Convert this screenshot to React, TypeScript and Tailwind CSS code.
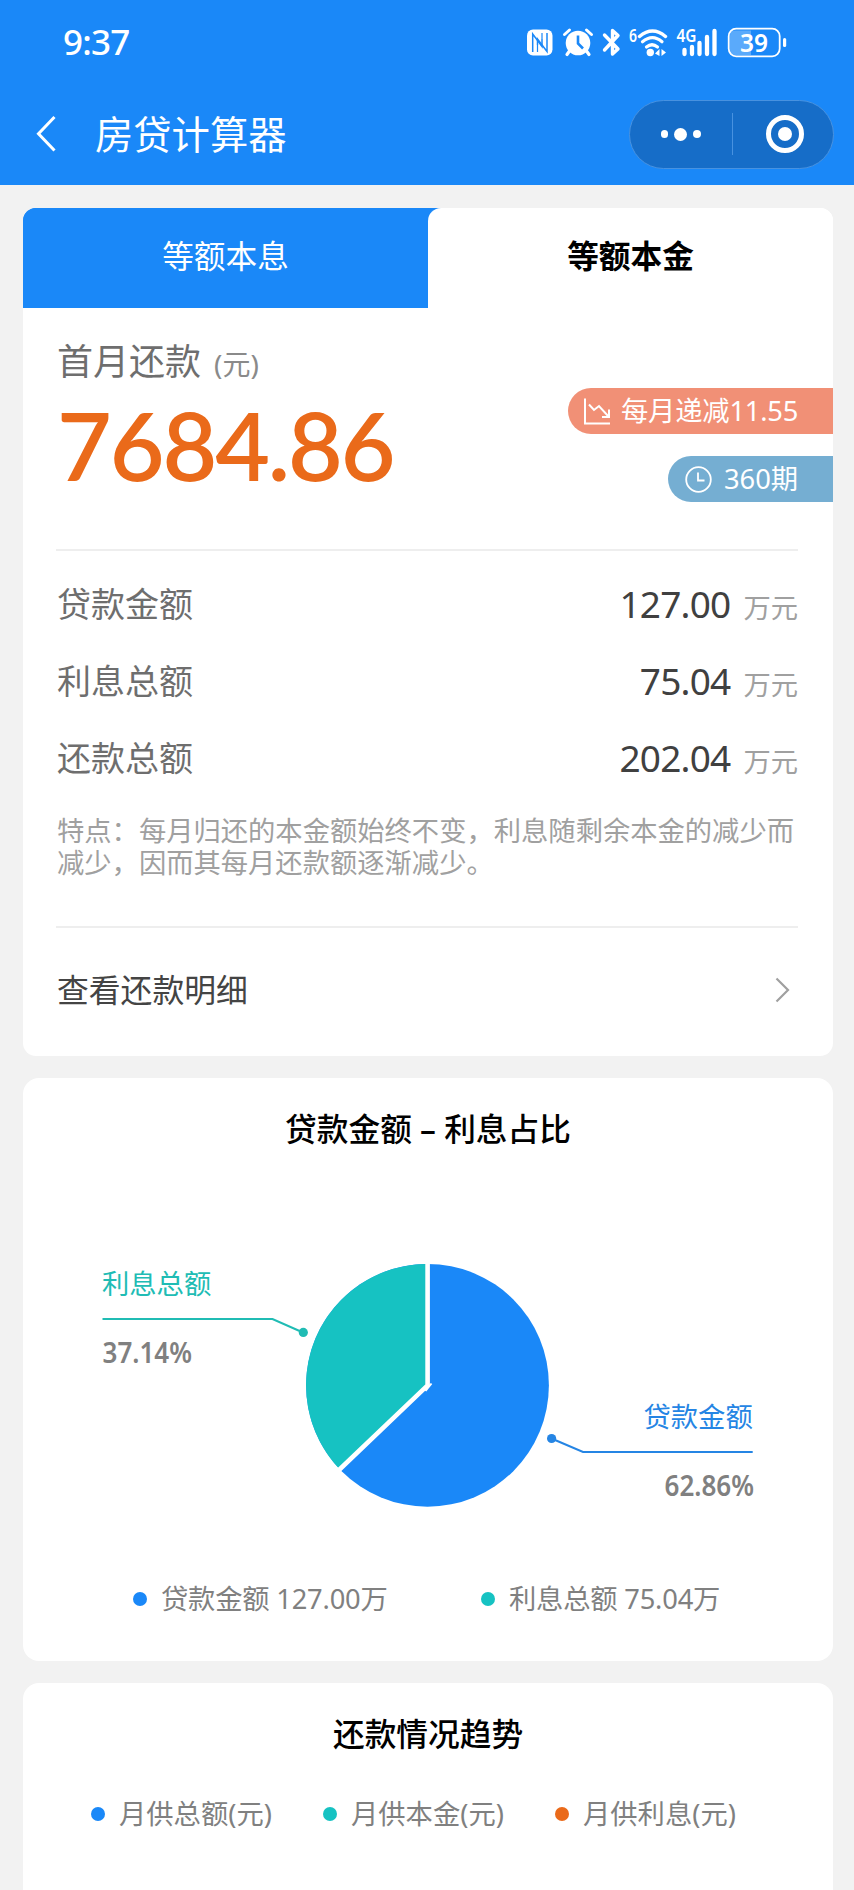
import React, { useState } from 'react';

type Dot = { color: string; label: string };

const TABS = ['等额本息', '等额本金'];

const ROWS = [
    { label: '贷款金额', value: '127.00' },
    { label: '利息总额', value: '75.04' },
    { label: '还款总额', value: '202.04' },
];

const TREND: Dot[] = [
    { color: 'bg-[#1a88f8]', label: '月供总额(元)' },
    { color: 'bg-[#16c2c2]', label: '月供本金(元)' },
    { color: 'bg-[#ea6a1a]', label: '月供利息(元)' },
];

const LegendItem: React.FC<Dot> = ({ color, label }) => (
    <div className="flex items-center gap-[14px]">
        <span className={`size-[14px] rounded-full ${color}`} />
        <span className="text-[27.3px] leading-[32px] whitespace-nowrap text-[#808080]">{label}</span>
    </div>
);

const StatusIcons = () => (
    <svg width="264" height="34" viewBox="525 24 264 34" fill="none" stroke="#fff">
        {/* NFC */}
        <rect x="527" y="28.5" width="25.5" height="26" rx="6" fill="#fff" stroke="none" />
        <path d="M532.7 51V33L542 45.5V38" stroke="#1a88f8" strokeWidth="1.5" />
        <path d="M537.5 44V38L547 50.5V32" stroke="#1a88f8" strokeWidth="1.5" />
        <path d="M537.5 44V51M542 32V38" stroke="#1a88f8" strokeWidth="1.2" />
        {/* Alarm */}
        <circle cx="578" cy="42" r="12.3" fill="#fff" stroke="none" />
        <path d="M564.5 33.5L569.5 29M591.5 33.5L586.5 29" strokeWidth="3" strokeLinecap="round" />
        <path d="M569.5 50L567 53.5M586.5 50L589 53.5" strokeWidth="3.2" strokeLinecap="round" />
        <path d="M578 34.5V42.5L583 47.5" stroke="#1a88f8" strokeWidth="2.6" />
        {/* Bluetooth */}
        <path d="M604.5 34L618 48L612.5 53V29.5L618 34.5L604.5 49" strokeWidth="3.4" strokeLinejoin="round" strokeLinecap="round" />
        {/* Wifi */}
        <path d="M639.5 35.5Q652.5 24.5 665.5 35.5" strokeWidth="3.4" strokeLinecap="round" />
        <path d="M642.5 40.8Q652.5 32.5 662 40.8" strokeWidth="3.2" strokeLinecap="round" />
        <path d="M646.5 46Q652 41.5 657.5 46" strokeWidth="3.2" strokeLinecap="round" />
        <circle cx="650.3" cy="51.5" r="3.7" fill="#fff" stroke="none" />
        <path d="M655 52.5L659.5 48V55M666 51.5L661.5 48V55" fill="#fff" stroke="none" />
        {/* Signal */}
        <path d="M684.5 49V53M692 46V53M699.5 42V53M707 36V53M714.5 30V53" strokeWidth="4.3" strokeLinecap="round" />
        {/* Battery */}
        <path d="M735 29.5H751V54H735Q730 54 730 49V34.5Q730 29.5 735 29.5Z" fill="#5aaafb" stroke="none" />
        <rect x="728.7" y="27.7" width="51" height="27.6" rx="7.5" strokeWidth="1.8" />
        <rect x="783" y="37" width="3.2" height="9" rx="1.5" fill="#fff" stroke="none" />
        <g fill="#fff" stroke="none" className="font-['Noto_Sans',sans-serif]">
            <text x="629" y="40.5" fontSize="17" fontWeight="600" textLength="8" lengthAdjust="spacingAndGlyphs">6</text>
            <text x="676.5" y="41" fontSize="17" fontWeight="600" textLength="20" lengthAdjust="spacingAndGlyphs">4G</text>
            <text x="740" y="50.5" fontSize="25" fontWeight="600" textLength="28" lengthAdjust="spacingAndGlyphs">39</text>
        </g>
    </svg>
);

const PieChart = () => (
    <svg width="810" height="280" viewBox="23 1245 810 280" className="font-['Noto_Sans','Noto_Sans_CJK_SC',sans-serif]">
        <circle cx="427.5" cy="1385.3" r="121.4" fill="#1a88f8" />
        <path d="M427.5 1385.3L339.7 1469.2A121.4 121.4 0 0 1 427.5 1263.9Z" fill="#16c2c2" />
        <path d="M427.6 1263V1385.3L339 1470" fill="none" stroke="#fff" strokeWidth="4.6" />
        <path d="M425.5 1391L431.5 1383.5" stroke="#fff" strokeWidth="2" />

        <path d="M102.5 1319H272.5L303 1332.5" fill="none" stroke="#20bcb4" strokeWidth="2" />
        <circle cx="303.3" cy="1332.4" r="4.6" fill="#20bcb4" />
        <text x="102" y="1294" fontSize="27.3" fill="#20bcb4">利息总额</text>
        <text x="102.5" y="1363" fontSize="28.5" fontWeight="600" fill="#808080" textLength="89.5" lengthAdjust="spacingAndGlyphs">37.14%</text>

        <path d="M752.7 1451.9H583L551.5 1438.5" fill="none" stroke="#2585e4" strokeWidth="2" />
        <circle cx="551.6" cy="1438.5" r="4.6" fill="#2585e4" />
        <text x="643.5" y="1427" fontSize="27.3" fill="#2585e4">贷款金额</text>
        <text x="664.5" y="1496" fontSize="28.5" fontWeight="600" fill="#808080" textLength="89.5" lengthAdjust="spacingAndGlyphs">62.86%</text>
    </svg>
);

const App: React.FC = () => {
    const [active, setActive] = useState(1);

    return (
        <div className="h-[1890px] w-[854px] overflow-hidden bg-[#f2f2f2] font-['Noto_Sans','Noto_Sans_CJK_SC',sans-serif]">
            <header className="h-[185px] bg-[#1a88f8] text-white">
                <div className="flex h-[83px] items-center justify-between pr-[65px] pl-[63px]">
                    <span className="text-[35px] leading-[40px] font-medium tracking-[-0.8px]">9:37</span>
                    <StatusIcons />
                </div>
                <div className="mt-4 flex h-[70px] items-center pr-5 pl-[34px]">
                    <svg width="24" height="40" viewBox="34 114 24 40" fill="none" stroke="#fff" strokeWidth="3">
                        <path d="M54.5 117L38.5 133.7L54.5 150.5" />
                    </svg>
                    <h1 className="ml-[37px] text-[38.3px] leading-[48px]">房贷计算器</h1>
                    <div className="ml-auto flex h-[69px] w-[205px] items-center rounded-full border border-[#4892e0] bg-[#166dc8]">
                        <div className="flex w-[101px] items-center justify-center gap-[6px]">
                            <span className="size-[7.5px] rounded-full bg-white" />
                            <span className="size-[13px] rounded-full bg-white" />
                            <span className="size-[7.5px] rounded-full bg-white" />
                        </div>
                        <span className="ml-px h-[42px] w-px bg-[#4892e0]" />
                        <div className="flex flex-1 justify-center pl-1">
                            <span className="flex size-[38px] items-center justify-center rounded-full border-[5px] border-white">
                                <span className="size-[14px] rounded-full bg-white" />
                            </span>
                        </div>
                    </div>
                </div>
            </header>

            <main className="flex flex-col gap-[22px] pt-[23px] pr-[21px] pl-[23px]">
                <section className="h-[848px] overflow-hidden rounded-[13px] bg-white">
                    <div className="flex h-[100px] bg-linear-to-r from-[#1a88f8] from-60% to-white to-60%">
                        {TABS.map((tab, i) => (
                            <button
                                key={tab}
                                onClick={() => setActive(i)}
                                className={
                                    i === active
                                        ? 'flex-1 rounded-tl-[13px] bg-white pb-[5px] text-[31.7px] font-bold text-black'
                                        : 'flex-1 bg-[#1a88f8] pb-[5px] text-[31.7px] text-white'
                                }
                            >
                                {tab}
                            </button>
                        ))}
                    </div>

                    <div className="flex justify-between pl-[34px]">
                        <div className="pt-8">
                            <div className="flex h-[44px] items-baseline text-[#6e6e6e]">
                                <span className="text-[36px] leading-[44px]">首月还款</span>
                                <span className="ml-[13px] text-[28px] leading-[40px] text-[#8a8a8a]">(元)</span>
                            </div>
                            <div className="mt-[6px] font-['Lato','Noto_Sans',sans-serif] text-[94.5px] leading-[110px] font-semibold tracking-[-2.1px] text-[#ea6a1a]">
                                7684.86
                            </div>
                        </div>
                        <div className="flex flex-col items-end gap-[22px] pt-20 text-[27.3px] leading-[46px] text-white">
                            <div className="flex h-[46px] w-[265px] items-center rounded-l-full bg-[#f19076] pl-4">
                                <svg width="27" height="27" viewBox="0 0 27 27" fill="none" stroke="#fff" strokeWidth="2">
                                    <path d="M1 0.5V25.5H26M5 6.5L10 12L15 8L24.5 18.5M25 11.5V19H18" />
                                </svg>
                                <span className="ml-[10px] tracking-[-0.2px] whitespace-nowrap">每月递减11.55</span>
                            </div>
                            <div className="flex h-[46px] w-[165px] items-center rounded-l-full bg-[#75aed2] pl-[17px]">
                                <svg width="27" height="27" viewBox="0 0 27 27" fill="none" stroke="#fff" strokeWidth="1.8">
                                    <circle cx="13.5" cy="13.5" r="12.3" />
                                    <path d="M13 6.5V14.5H19.5" />
                                </svg>
                                <span className="ml-3 whitespace-nowrap">360期</span>
                            </div>
                        </div>
                    </div>

                    <div className="mt-[47px] mr-[35px] ml-[33px] border-t-2 border-[#eeeeee] pt-[15px] pl-px">
                        {ROWS.map((row) => (
                            <div key={row.label} className="flex h-[77px] items-center justify-between">
                                <span className="text-[34px] text-[#6e6e6e]">{row.label}</span>
                                <span className="flex items-baseline pb-[2px]">
                                    <span className="text-[37px] tracking-[-0.8px] text-[#404040]">{row.value}</span>
                                    <span className="ml-[13px] text-[27.3px] text-[#a0a0a0]">万元</span>
                                </span>
                            </div>
                        ))}
                        <p className="mt-[18px] text-[27.3px] leading-[32.3px] text-[#a0a0a0]">
                            特点：每月归还的本金额始终不变，利息随剩余本金的减少而减少，因而其每月还款额逐渐减少。
                        </p>
                    </div>

                    <a className="mt-[46px] mr-[35px] ml-[33px] flex h-[127px] items-center justify-between border-t-2 border-[#eeeeee] pr-[8px] pl-px">
                        <span className="text-[31.8px] text-[#444444]">查看还款明细</span>
                        <svg width="15" height="26" viewBox="0 0 15 26" fill="none" stroke="#a0a0a0" strokeWidth="2.2">
                            <path d="M1.5 1.5L13 13L1.5 24.5" />
                        </svg>
                    </a>
                </section>

                <section className="h-[583px] rounded-[16px] bg-white pt-7">
                    <h2 className="text-center text-[31.7px] leading-[46px] font-medium text-black">贷款金额 – 利息占比</h2>
                    <div className="mt-[93px]">
                        <PieChart />
                    </div>
                    <div className="mt-[58px] grid grid-cols-[348px_auto] pl-[110px] tracking-[-0.2px]">
                        <LegendItem color="bg-[#1a88f8]" label="贷款金额 127.00万" />
                        <LegendItem color="bg-[#16c2c2]" label="利息总额 75.04万" />
                    </div>
                </section>

                <section className="h-[240px] rounded-[16px] bg-white pt-7">
                    <h2 className="text-center text-[31.7px] leading-[46px] font-medium text-black">还款情况趋势</h2>
                    <div className="mt-[41px] grid grid-cols-[232px_232px_232px] pl-[68px]">
                        {TREND.map((item) => (
                            <LegendItem key={item.label} color={item.color} label={item.label} />
                        ))}
                    </div>
                </section>
            </main>
        </div>
    );
};

export default App;
